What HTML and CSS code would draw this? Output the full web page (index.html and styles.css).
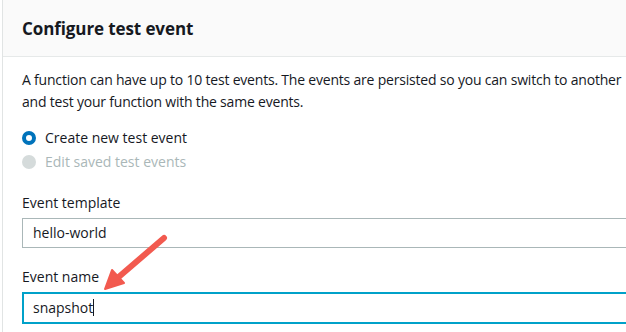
FILE: index.html
```html
<!DOCTYPE html>
<html lang="en">
<head>
    <meta charset="UTF-8">
    <title>Configure test event</title>
    <link rel="stylesheet" href="styles.css">
</head>
<body>
    <div class="panel">
        <div class="panel-header">
            <h2>Configure test event</h2>
        </div>
        <div class="panel-body">
            <p class="intro">A function can have up to 10 test events. The events are persisted so you can switch to another and test your function with the same events.</p>

            <div class="radio-group">
                <label class="radio">
                    <span class="radio-dot checked"></span>
                    Create new test event
                </label>
                <label class="radio disabled">
                    <span class="radio-dot"></span>
                    Edit saved test events
                </label>
            </div>

            <div class="form-group">
                <div class="field-label">Event template</div>
                <div class="field">hello-world</div>
            </div>

            <div class="form-group">
                <div class="field-label">Event name</div>
                <div class="field focused">snapshot<span class="caret"></span></div>
            </div>
        </div>
    </div>

    <!-- annotation arrow -->
    <svg class="arrow" width="626" height="332" viewBox="0 0 626 332">
        <line x1="164" y1="238" x2="114" y2="281" stroke="#f25a4f" stroke-width="6" stroke-linecap="round"/>
        <polygon points="105,289 112,270 124,283" fill="#f25a4f" stroke="#f25a4f" stroke-width="2" stroke-linejoin="round"/>
    </svg>
</body>
</html>
```

FILE: styles.css
```css
body {
    margin: 0;
    font-family: "Open Sans", "Noto Sans", Arial, sans-serif;
    color: #16191f;
    background: #fff;
    overflow: hidden;
}
.panel {
    margin-left: 2px;
    border-left: 1px solid #e1e4e4;
    height: 332px;
}
.panel-header {
    height: 56px;
    background: #fafafa;
    border-bottom: 1px solid #e6e9e9;
    display: flex;
    align-items: center;
    padding-left: 19px;
}
.panel-header h2 {
    margin: 0;
    font-size: 17px;
    font-weight: 700;
    letter-spacing: -0.1px;
}
.panel-body {
    padding: 12px 0 0 19px;
}
.intro {
    margin: 0;
    font-size: 14px;
    line-height: 22px;
    width: 603px;
    letter-spacing: -0.2px;
}
.radio-group {
    margin-top: 13px;
}
.radio {
    display: flex;
    align-items: center;
    gap: 9px;
    font-size: 14px;
    line-height: 24px;
}
.radio.disabled {
    color: #aab7b8;
}
.radio-dot {
    width: 14px;
    height: 14px;
    border-radius: 50%;
    background: #d5dbdb;
    box-sizing: border-box;
}
.radio-dot.checked {
    background: #fff;
    border: 4px solid #0073bb;
}
.form-group {
    margin-top: 19px;
}
.field-label {
    font-size: 14px;
    line-height: 20px;
    margin-bottom: 5px;
}
.field {
    width: 640px;
    height: 30px;
    box-sizing: border-box;
    border: 1px solid #aab7b8;
    padding: 0 10px;
    font-size: 14px;
    line-height: 28px;
}
.field.focused {
    height: 32px;
    border: 2px solid #00a1c9;
    padding: 0 9px;
    line-height: 28px;
}
.caret {
    display: inline-block;
    width: 1px;
    height: 17px;
    background: #16191f;
    vertical-align: -3px;
}
.arrow {
    position: absolute;
    left: 0;
    top: 0;
    pointer-events: none;
}
```
